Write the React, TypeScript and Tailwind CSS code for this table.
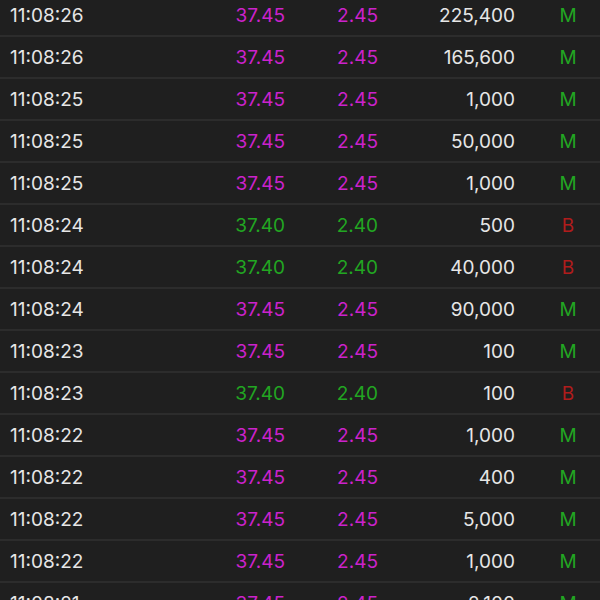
const rows: [string, string, string, string, "M" | "B"][] = [
  ["11:08:26", "37.45", "2.45", "225,400", "M"],
  ["11:08:26", "37.45", "2.45", "165,600", "M"],
  ["11:08:25", "37.45", "2.45", "1,000", "M"],
  ["11:08:25", "37.45", "2.45", "50,000", "M"],
  ["11:08:25", "37.45", "2.45", "1,000", "M"],
  ["11:08:24", "37.40", "2.40", "500", "B"],
  ["11:08:24", "37.40", "2.40", "40,000", "B"],
  ["11:08:24", "37.45", "2.45", "90,000", "M"],
  ["11:08:23", "37.45", "2.45", "100", "M"],
  ["11:08:23", "37.40", "2.40", "100", "B"],
  ["11:08:22", "37.45", "2.45", "1,000", "M"],
  ["11:08:22", "37.45", "2.45", "400", "M"],
  ["11:08:22", "37.45", "2.45", "5,000", "M"],
  ["11:08:22", "37.45", "2.45", "1,000", "M"],
  ["11:08:21", "37.45", "2.45", "2,100", "M"],
];

function App() {
  return (
    <div className="h-[600px] w-[600px] overflow-hidden bg-[#1f1f1f] font-['Inter',sans-serif] text-[19px]">
      <ul className="mt-[-5px]">
        {rows.map(([time, price, change, volume, side], i) => {
          const priceColor = side === "M" ? "text-[#cc22cc]" : "text-[#22a622]";
          return (
            <li
              key={i}
              className="flex h-[42px] items-center border-b-2 border-[#2c2c2c] pt-[2px]"
            >
              <span className="w-[200px] pl-[10px] text-[#e6e6e6]">{time}</span>
              <span className={`w-[85px] text-right ${priceColor}`}>{price}</span>
              <span className={`w-[93px] text-right ${priceColor}`}>{change}</span>
              <span className="w-[137px] text-right text-[#e6e6e6]">{volume}</span>
              <span
                className={`ml-[21px] w-[64px] text-center ${
                  side === "M" ? "text-[#22a622]" : "text-[#b01c1c]"
                }`}
              >
                {side}
              </span>
            </li>
          );
        })}
      </ul>
    </div>
  );
}

export default App;
